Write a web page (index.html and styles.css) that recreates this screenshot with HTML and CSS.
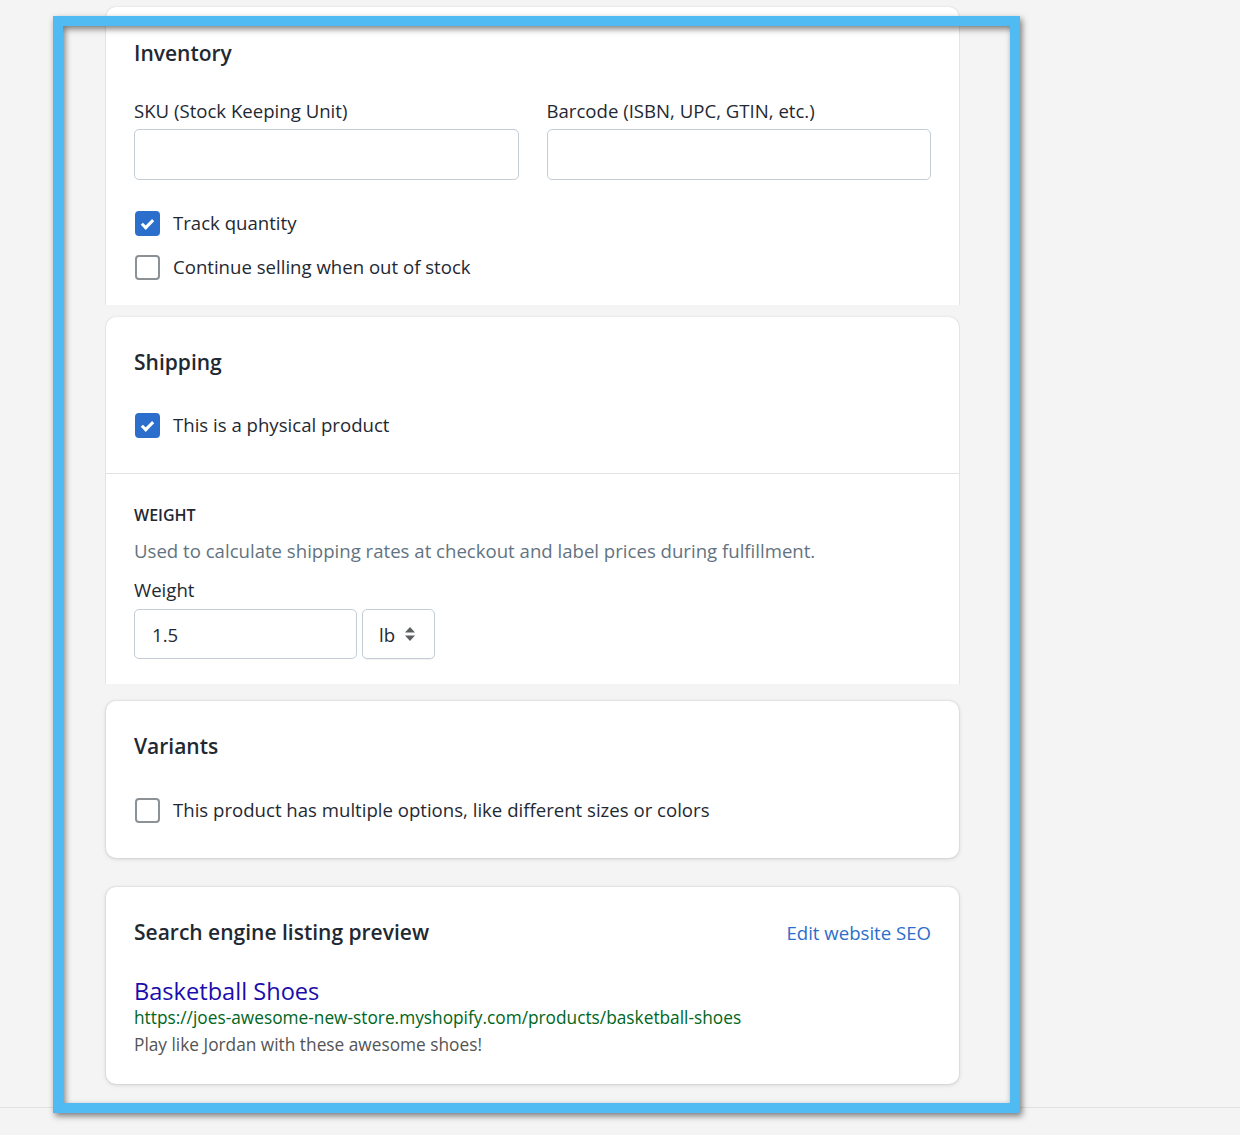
FILE: index.html
```html
<!DOCTYPE html>
<html lang="en">
<head>
  <meta charset="UTF-8">
  <title>Product details</title>
  <link rel="stylesheet" href="styles.css">
</head>
<body>
  <div class="layout">
    <div class="card cut inventory">
      <h2 class="card-title">Inventory</h2>
      <div class="field-row">
        <div class="field">
          <label class="label">SKU (Stock Keeping Unit)</label>
          <input class="text-input" type="text">
        </div>
        <div class="field">
          <label class="label">Barcode (ISBN, UPC, GTIN, etc.)</label>
          <input class="text-input" type="text">
        </div>
      </div>
      <div class="checks">
        <label class="check"><span class="box checked"></span>Track quantity</label>
        <label class="check"><span class="box"></span>Continue selling when out of stock</label>
      </div>
    </div>

    <div class="card cut shipping">
      <div class="section">
        <h2 class="card-title">Shipping</h2>
        <label class="check first"><span class="box checked"></span>This is a physical product</label>
      </div>
      <div class="section weight">
        <h3 class="subheading">WEIGHT</h3>
        <p class="help">Used to calculate shipping rates at checkout and label prices during fulfillment.</p>
        <label class="label">Weight</label>
        <div class="weight-row">
          <input class="text-input weight-input" type="text" value="1.5">
          <div class="select">
            lb
            <svg width="12" height="16" viewBox="0 0 12 16"><path d="M6 1 L11 6.5 H1 Z M1 9.5 H11 L6 15 Z" fill="#5c5f62"/></svg>
          </div>
        </div>
      </div>
    </div>

    <div class="card variants">
      <h2 class="card-title">Variants</h2>
      <label class="check first"><span class="box"></span>This product has multiple options, like different sizes or colors</label>
    </div>

    <div class="card seo">
      <div class="card-head">
        <h2 class="card-title">Search engine listing preview</h2>
        <a class="link" href="#">Edit website SEO</a>
      </div>
      <div class="preview">
        <div class="preview-title">Basketball Shoes</div>
        <div class="preview-url">https://joes-awesome-new-store.myshopify.com/products/basketball-shoes</div>
        <div class="preview-desc">Play like Jordan with these awesome shoes!</div>
      </div>
    </div>
  </div>
  <div class="footer-line"></div>

  <div class="highlight"></div>
</body>
</html>
```

FILE: styles.css
```css
html, body {
  height: 100%;
}
body {
  margin: 0;
  position: relative;
  background: #f4f4f4;
  font-family: "Open Sans", "Noto Sans", sans-serif;
  font-size: 18.6px;
  color: #1f2933;
}
.layout {
  width: 853px;
  margin-left: 106px;
  padding-top: 7px;
}
.card {
  background: #fff;
  border-radius: 10px;
  box-shadow: 0 0 0 1px rgba(63, 63, 68, 0.05), 0 1px 4px 0 rgba(63, 63, 68, 0.18);
  padding: 27px 28px 28px;
  box-sizing: border-box;
}
.card.cut {
  border-radius: 10px 10px 0 0;
  box-shadow: -1px 0 0 rgba(63, 63, 68, 0.07), 1px 0 0 rgba(63, 63, 68, 0.07), 0 -1px 2px rgba(63, 63, 68, 0.06);
}
.card-title {
  margin: 0;
  font-size: 21px;
  font-weight: 600;
  line-height: 36px;
}
.inventory {
  padding-top: 28px;
  padding-bottom: 24px;
}
.field-row {
  display: flex;
  gap: 28px;
  margin-top: 26px;
}
.field {
  flex: 1;
}
.label {
  display: block;
  line-height: 28px;
  margin-bottom: 4px;
}
.text-input {
  display: block;
  width: 100%;
  box-sizing: border-box;
  height: 51px;
  border: 1px solid #c4cdd5;
  border-radius: 5px;
  padding: 0 17px;
  font: inherit;
  color: inherit;
  background: #fff;
}
.checks {
  margin-top: 29px;
  display: flex;
  flex-direction: column;
  gap: 16px;
}
.check {
  display: flex;
  align-items: center;
  gap: 13px;
  line-height: 28px;
}
.box {
  width: 25px;
  height: 25px;
  box-sizing: border-box;
  border: 2px solid #8c9196;
  border-radius: 4px;
  margin-left: 1px;
  flex-shrink: 0;
  position: relative;
}
.box.checked {
  background: #2c6ecb;
  border-color: #2c6ecb;
}
.box.checked::after {
  content: "";
  position: absolute;
  left: 7px;
  top: 4px;
  width: 4px;
  height: 9px;
  border: solid #fff;
  border-width: 0 3px 3px 0;
  transform: rotate(45deg);
}
.shipping {
  margin-top: 12px;
  padding: 0;
}
.section {
  padding: 27px 28px 34px;
}
.check.first {
  margin-top: 31px;
}
.section.weight {
  border-top: 1px solid #e1e3e5;
  padding-top: 30px;
  padding-bottom: 25px;
}
.subheading {
  margin: 0;
  font-size: 16px;
  font-weight: 600;
  line-height: 22px;
}
.help {
  margin: 11px 0 11px;
  color: #637381;
  line-height: 28px;
}
.weight .label {
  margin-bottom: 5px;
}
.weight-row {
  display: flex;
  gap: 5px;
}
.weight-input {
  width: 223px;
  height: 50px;
}
.select {
  display: flex;
  align-items: center;
  gap: 9px;
  width: 73px;
  height: 50px;
  box-sizing: border-box;
  padding-left: 16px;
  border: 1px solid #c4cdd5;
  border-radius: 5px;
  box-shadow: 0 1px 1px rgba(0, 0, 0, 0.06);
}
.variants {
  margin-top: 17px;
  padding-bottom: 34px;
}
.variants .check.first {
  margin-top: 32px;
}
.seo {
  margin-top: 29px;
  padding-bottom: 27px;
}
.card-head {
  display: flex;
  justify-content: space-between;
  align-items: center;
}
.link {
  color: #2c6ecb;
  text-decoration: none;
}
.preview {
  margin-top: 26px;
}
.preview-title {
  color: #1a0dab;
  font-size: 23.6px;
  line-height: 30px;
}
.preview-url {
  color: #006621;
  font-size: 17.3px;
  line-height: 24px;
}
.preview-desc {
  color: #545454;
  font-size: 17.3px;
  line-height: 24px;
  margin-top: 3px;
}
.footer-line {
  margin-top: 23px;
  border-top: 1px solid #e1e1e1;
}
.highlight {
  position: absolute;
  left: 53px;
  top: 16px;
  width: 967px;
  height: 1097px;
  box-sizing: border-box;
  border: 10px solid #50bbf2;
  filter: drop-shadow(2px 3px 3px rgba(0, 0, 0, 0.5));
  pointer-events: none;
}
```
